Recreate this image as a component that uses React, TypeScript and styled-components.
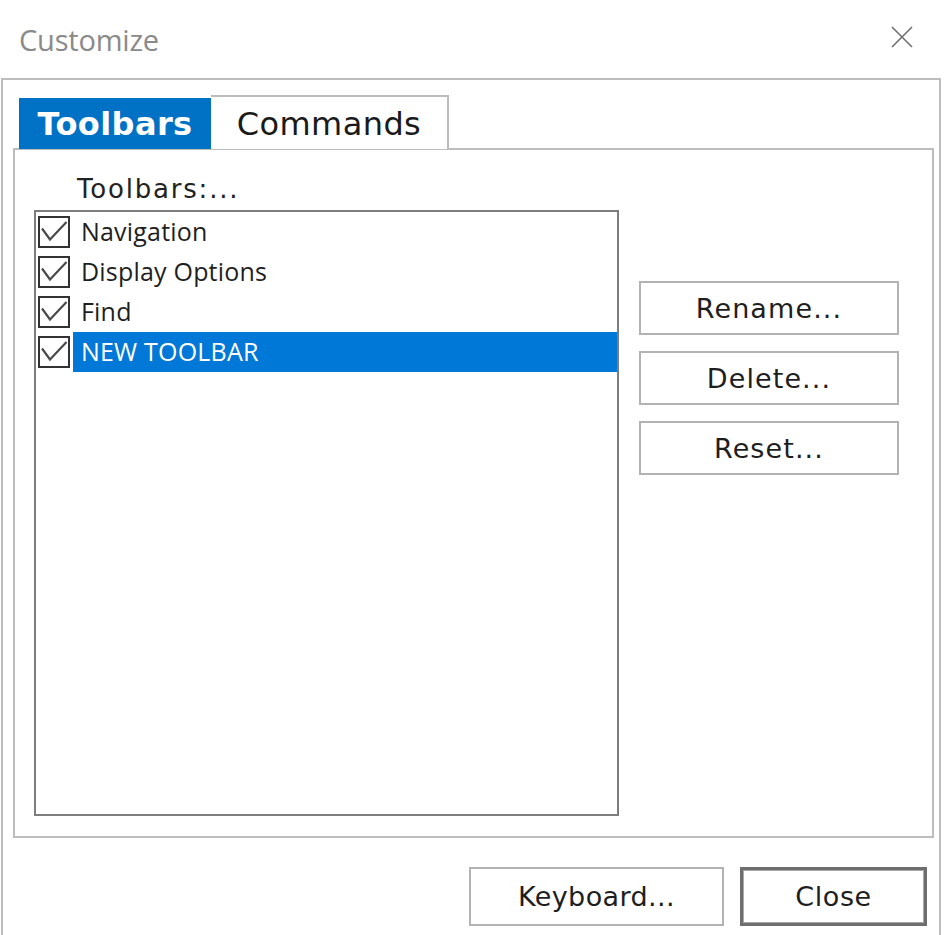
import React from "react";
import styled, { createGlobalStyle } from "styled-components";

const GlobalStyle = createGlobalStyle`
  html, body {
    margin: 0;
    padding: 0;
    background: #ffffff;
    overflow: hidden;
  }
  * { box-sizing: border-box; }
`;

const Window = styled.div`
  width: 945px;
  height: 935px;
  display: flex;
  flex-direction: column;
  background: #ffffff;
`;

const TitleBar = styled.div`
  height: 78px;
  flex: none;
  display: flex;
  align-items: center;
  justify-content: space-between;
  padding: 0 32px 0 19px;
`;

const Title = styled.span`
  font-family: "Open Sans", "Noto Sans", sans-serif;
  font-size: 29px;
  color: #8a8a8a;
  letter-spacing: -0.2px;
`;

const CloseGlyph = styled.svg`
  width: 22px;
  height: 22px;
  display: block;
  margin-bottom: 4px;
`;

const Frame = styled.div`
  flex: none;
  height: 880px;
  margin: 0 4px 0 1px;
  border: 2px solid #bdbdbd;
  border-bottom: none;
  padding: 16px 5px 0 10px;
  display: flex;
  flex-direction: column;
`;

const TabStrip = styled.div`
  display: flex;
  align-items: flex-end;
  padding-left: 6px;
  height: 53px;
  margin-bottom: -1px;
  position: relative;
  z-index: 1;
`;

const Tab = styled.div<{ $active?: boolean }>`
  height: ${(p) => (p.$active ? "51px" : "54px")};
  display: flex;
  align-items: center;
  justify-content: center;
  font-family: "DejaVu Sans", Verdana, sans-serif;
  font-size: 32px;
  font-weight: ${(p) => (p.$active ? 700 : 400)};
  color: ${(p) => (p.$active ? "#ffffff" : "#1a1a1a")};
  background: ${(p) => (p.$active ? "#0072c6" : "#ffffff")};
  border: ${(p) => (p.$active ? "none" : "2px solid #bdbdbd")};
  border-left: none;
  border-bottom: none;
  width: ${(p) => (p.$active ? "192px" : "238px")};
  letter-spacing: 0.4px;
  padding-top: 1px;
`;

const Panel = styled.div`
  width: 921px;
  height: 690px;
  border: 2px solid #bdbdbd;
  display: flex;
  padding: 0 19px 20px 19px;
  gap: 20px;
`;

const ListColumn = styled.div`
  display: flex;
  flex-direction: column;
`;

const Label = styled.div`
  margin: 24px 0 6px 43px;
  height: 30px;
  line-height: 30px;
  font-family: "DejaVu Sans", Verdana, sans-serif;
  font-size: 26px;
  letter-spacing: 1.8px;
  color: #222222;
`;

const ListBox = styled.div`
  width: 585px;
  flex: 1;
  border: 2px solid #7d7d7d;
  padding: 0 0 0 2px;
  display: flex;
  flex-direction: column;
`;

const Row = styled.div`
  height: 40px;
  display: flex;
  align-items: center;
`;

const CheckBox = styled.div`
  width: 32px;
  height: 32px;
  flex: none;
  border: 2px solid #333333;
  background: #ffffff;
  margin-right: 3px;
  display: flex;
  align-items: center;
  justify-content: center;
`;

const RowLabel = styled.div<{ $selected?: boolean }>`
  flex: 1;
  height: 40px;
  display: flex;
  align-items: center;
  padding-left: 8px;
  padding-bottom: 3px;
  font-family: "Open Sans", "Noto Sans", sans-serif;
  font-size: 25px;
  letter-spacing: 0.2px;
  color: ${(p) => (p.$selected ? "#ffffff" : "#1f1f1f")};
  background: ${(p) => (p.$selected ? "#0078d7" : "transparent")};
`;

const ButtonColumn = styled.div`
  display: flex;
  flex-direction: column;
  gap: 16px;
  padding-top: 131px;
`;

const Button = styled.button<{ $default?: boolean; $w: number; $h: number; $spacing?: number }>`
  width: ${(p) => p.$w}px;
  height: ${(p) => p.$h}px;
  background: #ffffff;
  border: ${(p) => (p.$default ? "3px solid #6e6e6e" : "2px solid #b3b3b3")};
  box-shadow: ${(p) => (p.$default ? "inset 0 0 0 1px #a9a9a9" : "none")};
  font-family: "DejaVu Sans", Verdana, sans-serif;
  font-size: 27px;
  letter-spacing: ${(p) => p.$spacing ?? 1.1}px;
  color: #1e1e1e;
  padding: 0;
  display: flex;
  align-items: center;
  justify-content: center;
  cursor: default;
`;

const Footer = styled.div`
  display: flex;
  justify-content: flex-end;
  gap: 16px;
  padding: 29px 7px 0 0;
`;

const Tick = () => (
  <svg width="28" height="28" viewBox="0 0 28 28">
    <polyline
      points="2,10.5 10,21.5 26.5,4"
      fill="none"
      stroke="#4a4a4a"
      strokeWidth="2.2"
    />
  </svg>
);

const toolbars = ["Navigation", "Display Options", "Find", "NEW TOOLBAR"];

export default function App() {
  return (
    <>
      <GlobalStyle />
      <Window>
        <TitleBar>
          <Title>Customize</Title>
          <CloseGlyph viewBox="0 0 22 22">
            <path d="M1 1 L21 21 M21 1 L1 21" stroke="#6f6f6f" strokeWidth="1.6" />
          </CloseGlyph>
        </TitleBar>
        <Frame>
          <TabStrip>
            <Tab $active>Toolbars</Tab>
            <Tab>Commands</Tab>
          </TabStrip>
          <Panel>
            <ListColumn>
              <Label>Toolbars:...</Label>
              <ListBox>
                {toolbars.map((name, i) => (
                  <Row key={name}>
                    <CheckBox>
                      <Tick />
                    </CheckBox>
                    <RowLabel $selected={i === toolbars.length - 1}>{name}</RowLabel>
                  </Row>
                ))}
              </ListBox>
            </ListColumn>
            <ButtonColumn>
              <Button $w={260} $h={54}>Rename...</Button>
              <Button $w={260} $h={54}>Delete...</Button>
              <Button $w={260} $h={54}>Reset...</Button>
            </ButtonColumn>
          </Panel>
          <Footer>
            <Button $w={255} $h={59} $spacing={0.4}>Keyboard...</Button>
            <Button $w={187} $h={59} $spacing={0.6} $default>
              Close
            </Button>
          </Footer>
        </Frame>
      </Window>
    </>
  );
}
